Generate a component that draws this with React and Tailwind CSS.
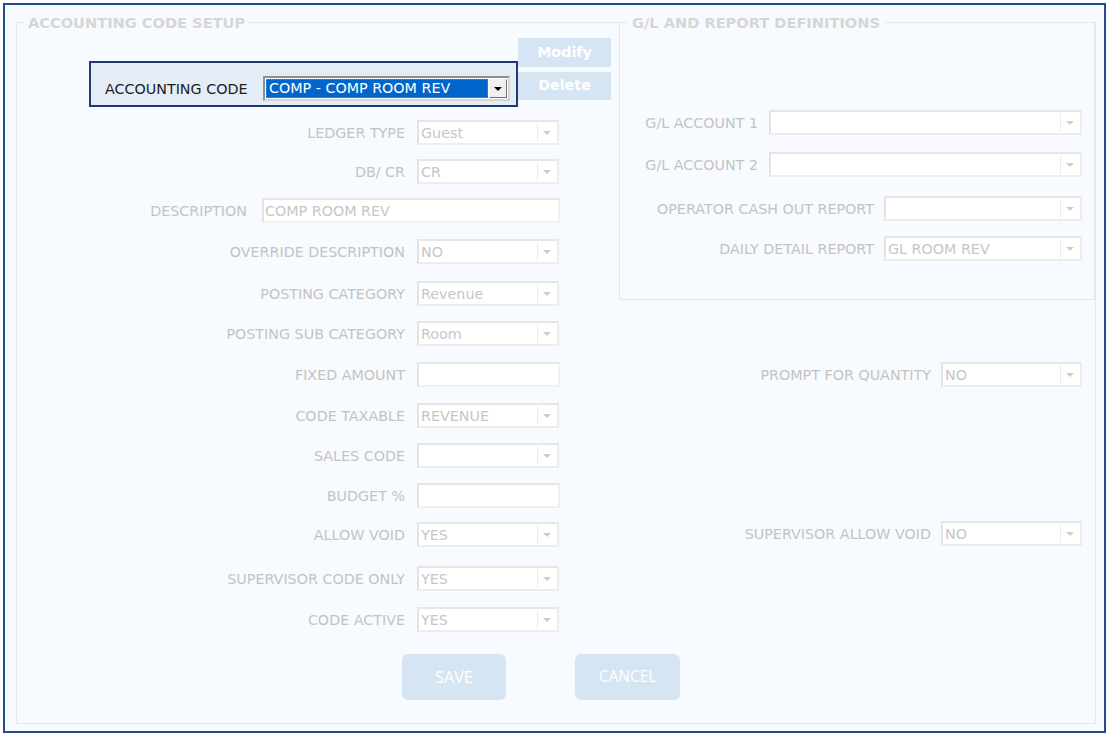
const leftRows = [
  { label: 'LEDGER TYPE', value: 'Guest', mt: 'mt-[13px]' },
  { label: 'DB/ CR', value: 'CR', mt: 'mt-[14px]' },
  { label: 'DESCRIPTION', value: 'COMP ROOM REV', mt: 'mt-[14px]', wide: true },
  { label: 'OVERRIDE DESCRIPTION', value: 'NO', mt: 'mt-[16px]' },
  { label: 'POSTING CATEGORY', value: 'Revenue', mt: 'mt-[17px]' },
  { label: 'POSTING SUB CATEGORY', value: 'Room', mt: 'mt-[15px]' },
  { label: 'FIXED AMOUNT', value: '', mt: 'mt-[16px]', input: true },
  { label: 'CODE TAXABLE', value: 'REVENUE', mt: 'mt-[16px]' },
  { label: 'SALES CODE', value: '', mt: 'mt-[15px]' },
  { label: 'BUDGET %', value: '', mt: 'mt-[15px]', input: true },
  { label: 'ALLOW VOID', value: 'YES', mt: 'mt-[14px]' },
  { label: 'SUPERVISOR CODE ONLY', value: 'YES', mt: 'mt-[19px]' },
  { label: 'CODE ACTIVE', value: 'YES', mt: 'mt-[16px]' },
]

function Select({ value, className = '' }) {
  return (
    <div
      className={`flex h-[25px] shrink-0 items-stretch border-2 border-[#ededed] border-l-[#e3e3e3] border-t-[#e6e6e6] bg-white ${className}`}
    >
      <span className="flex-1 truncate pl-[2px] text-[14.3px] leading-[23px] text-[#c6c6c6]">{value}</span>
      <span className="my-[1px] mr-[1px] flex w-[19px] items-center justify-center border-l border-[#ececec]">
        <span className="h-0 w-0 border-x-[4px] border-t-[4px] border-x-transparent border-t-[#cccccc]" />
      </span>
    </div>
  )
}

function TextBox({ value, className = '' }) {
  return (
    <div
      className={`flex h-[25px] shrink-0 items-center border-2 border-[#f0f0f0] border-l-[#e3e3e3] border-t-[#e6e6e6] bg-white ${className}`}
    >
      <span className="truncate pl-[1px] text-[14.3px] leading-[20px] text-[#c6c6c6]">{value}</span>
    </div>
  )
}

function Label({ children, className = '' }) {
  return (
    <span className={`shrink-0 whitespace-nowrap text-right text-[14.3px] leading-[18px] text-[#c3c3c3] ${className}`}>
      {children}
    </span>
  )
}

function AccountingCodeBox() {
  return (
    <div className="ml-[72px] mt-[30px] flex h-[46px] w-[429px] items-center border-2 border-[#1f3b6f] bg-[#e4ecf6] pb-[3px] pl-[14px] pt-[12px]">
      <span className="w-[158px] shrink-0 whitespace-nowrap pt-[1px] text-[14.3px] leading-[18px] text-[#1c1c1c]">
        ACCOUNTING CODE
      </span>
      <div className="flex h-[25px] w-[247px] items-stretch border-2 border-[#8f8f8f] border-b-[#d4d4d4] border-r-[#d4d4d4] bg-white">
        <span className="m-[1px] flex-1 border border-dotted border-[#c77a1c] bg-[#0066cc] pl-[2px] text-[14.3px] leading-[17px] text-white">
          COMP - COMP ROOM REV
        </span>
        <span className="my-[1px] mr-[1px] flex w-[18px] items-center justify-center border border-[#f4f4f4] border-b-[#6f6f6f] border-r-[#6f6f6f] bg-[#f0f0f0]">
          <span className="h-0 w-0 border-x-[4px] border-t-[4px] border-x-transparent border-t-black" />
        </span>
      </div>
    </div>
  )
}

export default function App() {
  return (
    <div className="h-[738px] w-[1109px] bg-white p-[3px] font-['DejaVu_Sans',Verdana,sans-serif]">
      <div className="h-[730px] w-[1103px] border-2 border-[#27498a] bg-[#f7fbff]">
        <fieldset className="ml-[11px] mt-[8px] h-[711px] w-[1080px] border border-[#e3e8ee]">
          <legend className="ml-[7px] px-[4px] text-[14.6px] font-bold leading-[19px] text-[#d6d6d6]">
            ACCOUNTING CODE SETUP
          </legend>

          <div className="flex">
            <div className="w-[602px] shrink-0">
              <div className="-mt-[1px] flex items-start">
                <AccountingCodeBox />
                <div className="mt-[7px] flex w-[93px] flex-col gap-[5px]">
                  <button type="button" className="h-[29px] bg-[#d6e5f3] text-[14.3px] font-bold text-white">
                    Modify
                  </button>
                  <button type="button" className="h-[28px] bg-[#d6e5f3] text-[14.3px] font-bold text-white">
                    Delete
                  </button>
                </div>
              </div>

              {leftRows.map((row) => (
                <div key={row.label} className={`flex h-[25px] items-center ${row.mt}`}>
                  {row.wide ? (
                    <>
                      <Label className="w-[230px]">{row.label}</Label>
                      <TextBox value={row.value} className="ml-[15px] w-[298px]" />
                    </>
                  ) : (
                    <>
                      <Label className="w-[388px]">{row.label}</Label>
                      {row.input ? (
                        <TextBox value={row.value} className="ml-[12px] w-[143px]" />
                      ) : (
                        <Select value={row.value} className="ml-[12px] w-[142px]" />
                      )}
                    </>
                  )}
                </div>
              ))}
            </div>

            <div className="w-[476px] shrink-0">
              <fieldset className="-mt-[19px] h-[287px] w-[476px] border border-[#e3e8ee]">
                <legend className="ml-[8px] bg-[#f7fbff] px-[4px] text-[14.6px] font-bold leading-[19px] text-[#d6d6d6]">
                  G/L AND REPORT DEFINITIONS
                </legend>
                <div className="mt-[78px] flex h-[25px] items-center">
                  <Label className="w-[138px]">G/L ACCOUNT 1</Label>
                  <Select value="" className="ml-[11px] w-[313px]" />
                </div>
                <div className="mt-[17px] flex h-[25px] items-center">
                  <Label className="w-[138px]">G/L ACCOUNT 2</Label>
                  <Select value="" className="ml-[11px] w-[313px]" />
                </div>
                <div className="mt-[19px] flex h-[25px] items-center">
                  <Label className="w-[254px]">OPERATOR CASH OUT REPORT</Label>
                  <Select value="" className="ml-[10px] w-[198px]" />
                </div>
                <div className="mt-[15px] flex h-[25px] items-center">
                  <Label className="w-[254px]">DAILY DETAIL REPORT</Label>
                  <Select value="GL ROOM REV" className="ml-[10px] w-[198px]" />
                </div>
              </fieldset>

              <div className="mt-[62px] flex h-[25px] items-center">
                <Label className="w-[312px]">PROMPT FOR QUANTITY</Label>
                <Select value="NO" className="ml-[10px] w-[141px]" />
              </div>
              <div className="mt-[134px] flex h-[25px] items-center">
                <Label className="w-[312px]">SUPERVISOR ALLOW VOID</Label>
                <Select value="NO" className="ml-[10px] w-[141px]" />
              </div>
            </div>
          </div>

          <div className="ml-[385px] mt-[22px] flex gap-[69px] font-['Open_Sans',sans-serif]">
            <button type="button" className="h-[46px] w-[104px] rounded-[6px] bg-[#d6e5f3] text-[16px] text-white">
              SAVE
            </button>
            <button type="button" className="h-[46px] w-[105px] rounded-[6px] bg-[#d6e5f3] text-[15.5px] text-white">
              CANCEL
            </button>
          </div>
        </fieldset>
      </div>
    </div>
  )
}
